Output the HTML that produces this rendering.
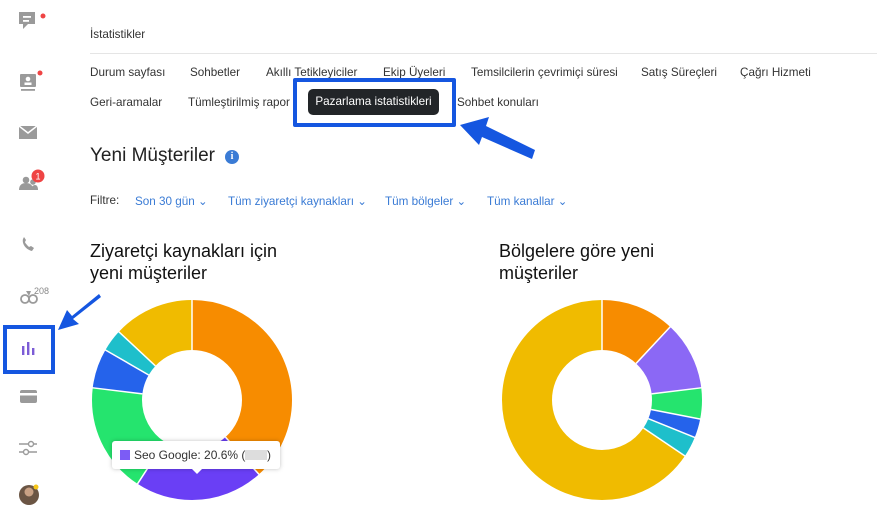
<!DOCTYPE html>
<html><head><meta charset="utf-8"><style>
*{margin:0;padding:0;box-sizing:border-box}
body{width:877px;height:515px;background:#fff;font-family:"Liberation Sans",sans-serif;color:#222;position:relative;overflow:hidden}
.a{position:absolute;white-space:nowrap}
.t{font-size:11.7px;color:#333}
.f{font-size:11.7px;color:#3a7bd5}
</style></head><body>
<svg class="a" style="left:0;top:0" width="120" height="515">
 <g fill="#9a9a9a">
  <path d="M19 12h16v12h-7l-5 5v-5h-4z"/><rect x="23" y="16" width="8" height="1.8" fill="#fff"/><rect x="23" y="20" width="6" height="1.8" fill="#fff"/>
  <circle cx="43" cy="16" r="2.5" fill="#ef4444"/>
  <rect x="20" y="74" width="16" height="13" rx="1"/><rect x="21" y="89" width="14" height="1.8"/><circle cx="28" cy="79" r="2.3" fill="#fff"/><rect x="24.5" y="82.5" width="7" height="2.5" fill="#fff"/>
  <circle cx="40" cy="73" r="2.5" fill="#ef4444"/>
  <path d="M19 126h18v13H19z"/><path d="M19 126l9 7 9-7" stroke="#fff" stroke-width="1.5" fill="none"/>
  <circle cx="26" cy="180" r="3.3"/><path d="M19 190c0-5 3-7 7-7s7 2 7 7z"/><circle cx="33" cy="182" r="2.8"/><path d="M31 190c0-3 2-5 4-5s3 2 3 5z"/>
  <path d="M23 239c-1 3 1 10 9 12l2-3-3-2-2 1c-1-1-4-4-4-5l1-2-2-3z"/>
  <circle cx="25" cy="299" r="4" fill="none" stroke="#9a9a9a" stroke-width="1.8"/><circle cx="33" cy="299" r="4" fill="none" stroke="#9a9a9a" stroke-width="1.8"/><path d="M26 291l3 5 2-5z"/>
  <rect x="20" y="390" width="17" height="13" rx="2"/><rect x="20" y="393" width="17" height="2.5" fill="#fff"/>
  <path d="M19 444h18M19 452h18" stroke="#9a9a9a" stroke-width="1.5"/><circle cx="31" cy="444" r="2.5" fill="#fff" stroke="#9a9a9a" stroke-width="1.4"/><circle cx="26" cy="452" r="2.5" fill="#fff" stroke="#9a9a9a" stroke-width="1.4"/>
 </g>
 <circle cx="38" cy="176" r="6.5" fill="#ef4444"/><text x="38" y="179.5" font-size="9" fill="#fff" text-anchor="middle" font-family="Liberation Sans">1</text>
 <text x="34" y="294" font-size="9" fill="#888" font-family="Liberation Sans">208</text>
 <rect x="5" y="327" width="48" height="45" fill="none" stroke="#1556e0" stroke-width="4"/>
 <g fill="#7c5cd6"><rect x="22" y="346" width="2.4" height="9"/><rect x="27" y="342" width="2.4" height="13"/><rect x="32" y="348" width="2.4" height="7"/></g>
 <path d="M99 294L72 316l-5-6-9 20 21-6-6-5 28-22z" fill="#1556e0"/>
 <circle cx="29" cy="495" r="10" fill="#6b5544"/><circle cx="29" cy="492" r="4.5" fill="#c9a184"/><circle cx="36" cy="487" r="2.5" fill="#f5c518"/>
</svg>

<div class="a t" style="left:90px;top:28px">İstatistikler</div>
<div class="a" style="left:90px;top:53px;width:787px;height:1px;background:#e5e5e5"></div>

<div class="a t" style="left:90px;top:66px">Durum sayfası</div>
<div class="a t" style="left:190px;top:66px">Sohbetler</div>
<div class="a t" style="left:266px;top:66px">Akıllı Tetikleyiciler</div>
<div class="a t" style="left:383px;top:66px">Ekip Üyeleri</div>
<div class="a t" style="left:471px;top:66px">Temsilcilerin çevrimiçi süresi</div>
<div class="a t" style="left:641px;top:66px">Satış Süreçleri</div>
<div class="a t" style="left:740px;top:66px">Çağrı Hizmeti</div>
<div class="a t" style="left:90px;top:96px">Geri-aramalar</div>
<div class="a t" style="left:188px;top:96px">Tümleştirilmiş rapor</div>
<div class="a t" style="left:457px;top:96px">Sohbet konuları</div>
<div class="a" style="left:293px;top:78px;width:163px;height:49px;border:4px solid #1556e0;border-radius:2px;background:#fff"></div>
<div class="a" style="left:308px;top:89px;width:131px;height:26px;background:#222528;border-radius:5px;color:#fff;font-size:11.7px;line-height:26px;text-align:center">Pazarlama istatistikleri</div>
<svg class="a" style="left:455px;top:108px" width="90" height="52"><path d="M80 42L31 18l3-9-29 8 19 20 3-8 50 22z" fill="#1556e0"/></svg>

<div class="a" style="left:90px;top:145px;font-size:19px;color:#222">Yeni Müşteriler</div>
<div class="a" style="left:225px;top:150px;width:14px;height:14px;border-radius:50%;background:#3a7bd5;color:#fff;font-size:10px;font-weight:bold;text-align:center;line-height:14px;font-family:'Liberation Serif',serif">i</div>

<div class="a t" style="left:90px;top:194px">Filtre:</div>
<div class="a f" style="left:135px;top:194px">Son 30 gün ⌄</div>
<div class="a f" style="left:228px;top:194px">Tüm ziyaretçi kaynakları ⌄</div>
<div class="a f" style="left:385px;top:194px">Tüm bölgeler ⌄</div>
<div class="a f" style="left:487px;top:194px">Tüm kanallar ⌄</div>

<div class="a" style="left:90px;top:240px;font-size:18px;line-height:22px;color:#111">Ziyaretçi kaynakları için<br>yeni müşteriler</div>
<div class="a" style="left:499px;top:240px;font-size:18px;line-height:22px;color:#111">Bölgelere göre yeni<br>müşteriler</div>

<svg class="a" style="left:0;top:0" width="877" height="515">
 <g transform="translate(192,400) rotate(-90)" fill="none" stroke-width="50">
  <circle r="75" stroke="#f78c00" stroke-dasharray="180.6 471.24" stroke-dashoffset="0"/>
  <circle r="75" stroke="#6a3ff5" stroke-dasharray="98.2 471.24" stroke-dashoffset="-180.6"/>
  <circle r="75" stroke="#25e46e" stroke-dasharray="83.8 471.24" stroke-dashoffset="-278.8"/>
  <circle r="75" stroke="#2563eb" stroke-dasharray="30.1 471.24" stroke-dashoffset="-362.6"/>
  <circle r="75" stroke="#1ebfcb" stroke-dasharray="17 471.24" stroke-dashoffset="-392.7"/>
  <circle r="75" stroke="#f0bb00" stroke-dasharray="61.5 471.24" stroke-dashoffset="-409.7"/>
 </g>
 <g transform="translate(602,400) rotate(-90)" fill="none" stroke-width="50">
  <circle r="75" stroke="#f78c00" stroke-dasharray="56.3 471.24" stroke-dashoffset="0"/>
  <circle r="75" stroke="#8b68f5" stroke-dasharray="52.4 471.24" stroke-dashoffset="-56.3"/>
  <circle r="75" stroke="#25e46e" stroke-dasharray="23.6 471.24" stroke-dashoffset="-108.7"/>
  <circle r="75" stroke="#2563eb" stroke-dasharray="14.4 471.24" stroke-dashoffset="-132.3"/>
  <circle r="75" stroke="#1ebfcb" stroke-dasharray="15.7 471.24" stroke-dashoffset="-146.7"/>
  <circle r="75" stroke="#f0bb00" stroke-dasharray="309 471.24" stroke-dashoffset="-162.4"/>
 </g>
 <g stroke="#fff" stroke-width="1.5">
  <g transform="translate(192,400)">
   <line x1="0" y1="-50" x2="0" y2="-101" transform="rotate(0)"/><line x1="0" y1="-50" x2="0" y2="-101" transform="rotate(138)"/>
   <line x1="0" y1="-50" x2="0" y2="-101" transform="rotate(213)"/><line x1="0" y1="-50" x2="0" y2="-101" transform="rotate(277)"/>
   <line x1="0" y1="-50" x2="0" y2="-101" transform="rotate(300)"/><line x1="0" y1="-50" x2="0" y2="-101" transform="rotate(313)"/>
  </g>
  <g transform="translate(602,400)">
   <line x1="0" y1="-50" x2="0" y2="-101" transform="rotate(0)"/><line x1="0" y1="-50" x2="0" y2="-101" transform="rotate(43)"/>
   <line x1="0" y1="-50" x2="0" y2="-101" transform="rotate(83)"/><line x1="0" y1="-50" x2="0" y2="-101" transform="rotate(101)"/>
   <line x1="0" y1="-50" x2="0" y2="-101" transform="rotate(112)"/><line x1="0" y1="-50" x2="0" y2="-101" transform="rotate(124)"/>
  </g>
 </g>
 <rect x="112" y="441" width="168" height="28" rx="3" fill="#fff" style="filter:drop-shadow(0 0 2px rgba(0,0,0,.25))"/>
 <path d="M191 468l6 6 6-6z" fill="#fff"/>
 <rect x="120" y="450" width="10" height="10" fill="#7c5cf5"/>
 <text x="134" y="459" font-size="12" fill="#333" font-family="Liberation Sans">Seo Google: 20.6% (</text>
 <rect x="245" y="450" width="22" height="10" fill="#ddd"/>
 <text x="267" y="459" font-size="12" fill="#333" font-family="Liberation Sans">)</text>
</svg>
</body></html>
